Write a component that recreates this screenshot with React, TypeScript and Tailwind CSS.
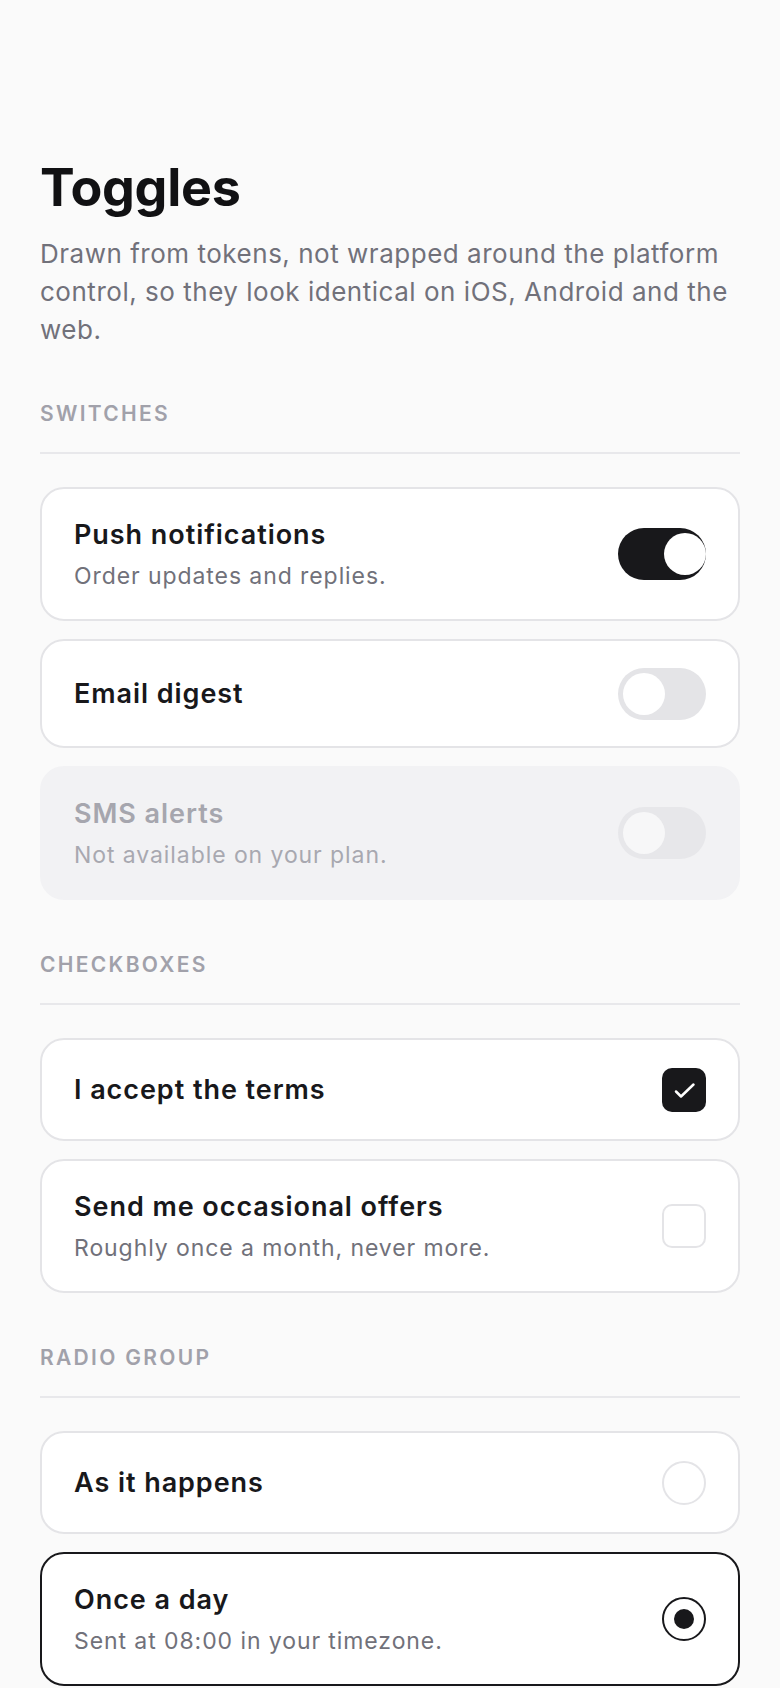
import React from "react";

function Toggle({ on, disabled }: { on: boolean; disabled?: boolean }) {
  const track = disabled ? "bg-[#e7e7ea]" : on ? "bg-[#18181b]" : "bg-[#e4e4e7]";
  const knob = disabled ? "bg-[#f7f7f8]" : "bg-white";
  return (
    <div className={`flex h-[52px] w-[88px] shrink-0 items-center rounded-full pl-[5px] ${track}`}>
      <div
        className={`h-[42px] w-[42px] rounded-full ${knob} ${on ? "translate-x-[41px]" : ""}`}
      />
    </div>
  );
}

function Checkbox({ checked }: { checked: boolean }) {
  return (
    <div className="flex h-[46px] shrink-0 items-center">
      {checked ? (
        <div className="h-[44px] w-[44px] rounded-[10px] bg-[#18181b]">
          <svg width="44" height="44" viewBox="0 0 44 44" fill="none">
            <polyline
              points="14,23.5 19,28.5 31.5,16.5"
              stroke="white"
              strokeWidth="2.5"
              strokeLinecap="round"
              strokeLinejoin="round"
            />
          </svg>
        </div>
      ) : (
        <div className="h-[44px] w-[44px] rounded-[10px] border-2 border-[#e4e4e7] bg-white" />
      )}
    </div>
  );
}

function Radio({ checked }: { checked: boolean }) {
  return (
    <div className="flex h-[46px] shrink-0 items-center">
      {checked ? (
        <div className="flex h-[44px] w-[44px] items-center justify-center rounded-full border-[2.5px] border-[#18181b] bg-white">
          <div className="h-[20px] w-[20px] rounded-full bg-[#18181b]" />
        </div>
      ) : (
        <div className="h-[44px] w-[44px] rounded-full border-2 border-[#e4e4e7] bg-white" />
      )}
    </div>
  );
}

function Row({
  title,
  sub,
  control,
  disabled,
  selected,
}: {
  title: string;
  sub?: string;
  control: React.ReactNode;
  disabled?: boolean;
  selected?: boolean;
}) {
  const box = disabled
    ? "bg-[#f2f2f4] border-[#f2f2f4]"
    : selected
    ? "bg-white border-[#18181b]"
    : "bg-white border-[#e4e4e7]";
  return (
    <div className={`flex items-center justify-between rounded-[24px] border-2 px-8 py-[26.5px] ${box}`}>
      <div className="flex flex-col gap-[6px]">
        <div
          className={`text-[27px] font-semibold leading-[37px] tracking-[0.035em] ${
            disabled ? "text-[#a6a6ae]" : "text-[#18181b]"
          }`}
        >
          {title}
        </div>
        {sub && (
          <div
            className={`text-[23px] leading-[34px] tracking-[0.04em] ${
              disabled ? "text-[#a8a8b0]" : "text-[#71717a]"
            }`}
          >
            {sub}
          </div>
        )}
      </div>
      {control}
    </div>
  );
}

function Section({ label, children }: { label: string; children: React.ReactNode }) {
  return (
    <section className="mt-[51px]">
      <div className="text-[21px] font-semibold uppercase leading-[28px] tracking-[0.11em] text-[#a1a1aa]">
        {label}
      </div>
      <div className="mt-6 h-[2px] bg-[#e8e8eb]" />
      <div className="mt-[33px] flex flex-col gap-[18px]">{children}</div>
    </section>
  );
}

export default function App() {
  return (
    <div className="min-h-screen bg-[#fafafa] px-10 pb-16 pt-[158px] font-['Inter','Noto_Sans',sans-serif] antialiased">
      <h1 className="text-[52px] font-bold leading-[60px] tracking-[-0.005em] text-[#111113]">Toggles</h1>
      <p className="mt-[17px] text-[26px] leading-[38px] tracking-[0.02em] text-[#71717a]">
        Drawn from tokens, not wrapped around the platform control, so they look identical on iOS, Android and the web.
      </p>

      <Section label="Switches">
        <Row title="Push notifications" sub="Order updates and replies." control={<Toggle on />} />
        <Row title="Email digest" control={<Toggle on={false} />} />
        <Row title="SMS alerts" sub="Not available on your plan." disabled control={<Toggle on={false} disabled />} />
      </Section>

      <Section label="Checkboxes">
        <Row title="I accept the terms" control={<Checkbox checked />} />
        <Row title="Send me occasional offers" sub="Roughly once a month, never more." control={<Checkbox checked={false} />} />
      </Section>

      <Section label="Radio group">
        <Row title="As it happens" control={<Radio checked={false} />} />
        <Row title="Once a day" sub="Sent at 08:00 in your timezone." selected control={<Radio checked />} />
      </Section>
    </div>
  );
}
